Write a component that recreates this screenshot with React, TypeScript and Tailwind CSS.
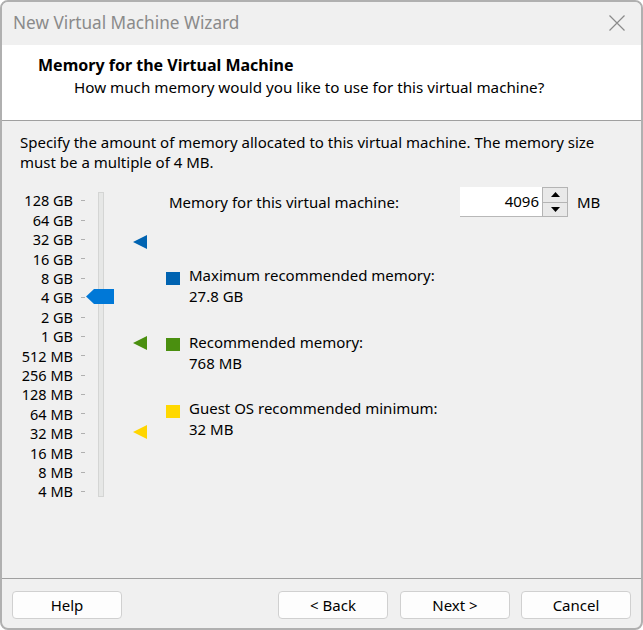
import React from "react";

const LABELS = [
  "128 GB", "64 GB", "32 GB", "16 GB", "8 GB", "4 GB", "2 GB", "1 GB",
  "512 MB", "256 MB", "128 MB", "64 MB", "32 MB", "16 MB", "8 MB", "4 MB",
];

const ROW = 19.4;

function Marker({ color, top }: { color: string; top: number }) {
  return (
    <svg
      className="absolute left-[48px]"
      style={{ top }}
      width="14"
      height="14"
      viewBox="0 0 14 14"
    >
      <polygon points="14,0 14,14 0,7" fill={color} />
    </svg>
  );
}

function Legend({ color, title, value }: { color: string; title: string; value: string }) {
  return (
    <div className="flex items-start h-[66.5px]">
      <div className={`w-[14px] h-[13px] mt-[6.5px] ${color}`} />
      <div className="ml-[9px] leading-[21px]">
        <div>{title}</div>
        <div>{value}</div>
      </div>
    </div>
  );
}

function Btn({ children, className = "" }: { children: React.ReactNode; className?: string }) {
  return (
    <button
      className={`h-[28px] w-[110px] rounded-[4px] border border-[#d0d0d0] bg-[#fdfdfd] text-[15px] text-black ${className}`}
    >
      {children}
    </button>
  );
}

export default function App() {
  return (
    <div
      className="w-[643px] h-[630px] bg-white"
      style={{ fontFamily: '"Noto Sans", "Open Sans", sans-serif' }}
    >
      <div className="w-[643px] h-[630px] border-2 border-[#b0b0b0] rounded-[8px] overflow-hidden flex flex-col bg-[#f0f0f0] text-black">
        {/* Title bar */}
        <div className="h-[43px] shrink-0 flex items-center justify-between pl-[11px] pr-[16px] bg-[#f0f0f0]">
          <span className="text-[17.2px] text-[#8a8a8a] mt-[-2px]">New Virtual Machine Wizard</span>
          <svg width="16" height="16" viewBox="0 0 16 16" className="mt-[-2px]">
            <path d="M0.5 0.5 L15.5 15.5 M15.5 0.5 L0.5 15.5" stroke="#8a8a8a" strokeWidth="1.2" />
          </svg>
        </div>

        {/* Header */}
        <div className="h-[76px] shrink-0 bg-white border-b border-[#a0a0a0] pl-[36px] pt-[9px]">
          <div className="text-[16px] font-bold leading-[22px]">Memory for the Virtual Machine</div>
          <div className="text-[15.2px] leading-[22px] pl-[36px]">
            How much memory would you like to use for this virtual machine?
          </div>
        </div>

        {/* Body */}
        <div className="flex-1 pl-[18px] pr-[12px] pt-[12px] text-[15px]">
          <p className="leading-[19.5px] w-[600px]">
            Specify the amount of memory allocated to this virtual machine. The memory size
            must be a multiple of 4 MB.
          </p>

          <div className="flex items-start mt-[15px]">
            {/* Scale labels */}
            <div className="flex flex-col w-[65px] pt-[4px] text-[14.5px]">
              {LABELS.map((l) => (
                <div key={l} className="flex items-center justify-end" style={{ height: ROW }}>
                  <span className="leading-none">{l}</span>
                  <span className="ml-[8px] w-[4px] h-px bg-[#b0b0b0]" />
                </div>
              ))}
            </div>

            {/* Slider */}
            <div className="relative w-[80px] h-[315px] pt-[5px]">
              <div className="ml-[13px] w-[6px] h-[305px] bg-[#e6e7e6] border border-[#d4d5d4]" />
              <svg className="absolute left-[1px] top-[102px]" width="28" height="15" viewBox="0 0 28 15">
                <polygon points="8,0 28,0 28,15 8,15 0,7.5" fill="#0078d7" />
              </svg>
              <Marker color="#0063b1" top={48} />
              <Marker color="#4a8f0f" top={149} />
              <Marker color="#ffd500" top={238} />
            </div>

            {/* Right side */}
            <div className="flex flex-col ml-[1px]">
              <div className="flex items-center h-[30px] pl-[3px]">
                <span className="w-[291px]">Memory for this virtual machine:</span>
                <div className="w-[82px] h-[30px] bg-white border-b border-[#b8b8b8] flex items-center justify-end pr-[3px]">
                  4096
                </div>
                <div className="w-[26px] h-[30px] flex flex-col border border-[#b4b4b4] bg-[#f0f0f0]">
                  <div className="flex-1 flex items-center justify-center border-b border-[#b4b4b4] bg-[#e9e9e9]">
                    <svg width="9" height="5" viewBox="0 0 9 5">
                      <polygon points="4.5,0 9,5 0,5" fill="#000" />
                    </svg>
                  </div>
                  <div className="flex-1 flex items-center justify-center bg-[#e9e9e9]">
                    <svg width="9" height="5" viewBox="0 0 9 5">
                      <polygon points="0,0 9,0 4.5,5" fill="#000" />
                    </svg>
                  </div>
                </div>
                <span className="ml-[9px]">MB</span>
              </div>

              <div className="flex flex-col mt-[48px]">
                <Legend color="bg-[#0063b1]" title="Maximum recommended memory:" value="27.8 GB" />
                <Legend color="bg-[#4a8f0f]" title="Recommended memory:" value="768 MB" />
                <Legend color="bg-[#ffd800]" title="Guest OS recommended minimum:" value="32 MB" />
              </div>
            </div>
          </div>
        </div>

        {/* Footer */}
        <div className="h-[50px] shrink-0 border-t border-[#a0a0a0] flex items-start pt-[12px] pl-[10px] pr-[10px]">
          <Btn>Help</Btn>
          <div className="flex-1" />
          <Btn>&lt; Back</Btn>
          <Btn className="ml-[12px]">Next &gt;</Btn>
          <Btn className="ml-[11px]">Cancel</Btn>
        </div>
      </div>
    </div>
  );
}
